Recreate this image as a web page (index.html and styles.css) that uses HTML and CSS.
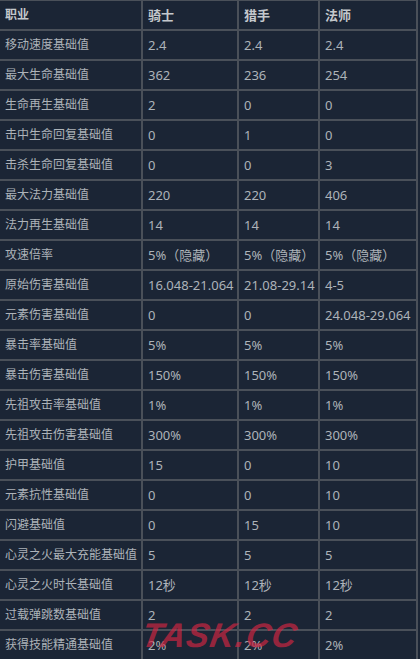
FILE: index.html
```html
<!DOCTYPE html>
<html lang="zh">
<head>
<meta charset="utf-8">
<link rel="stylesheet" href="styles.css">
</head>
<body>
<div class="page">
<div class="grid">
  <div class="c h k">职业</div><div class="c h">骑士</div><div class="c h">猎手</div><div class="c h">法师</div>
  <div class="c k">移动速度基础值</div><div class="c">2.4</div><div class="c">2.4</div><div class="c">2.4</div>
  <div class="c k">最大生命基础值</div><div class="c">362</div><div class="c">236</div><div class="c">254</div>
  <div class="c k">生命再生基础值</div><div class="c">2</div><div class="c">0</div><div class="c">0</div>
  <div class="c k">击中生命回复基础值</div><div class="c">0</div><div class="c">1</div><div class="c">0</div>
  <div class="c k">击杀生命回复基础值</div><div class="c">0</div><div class="c">0</div><div class="c">3</div>
  <div class="c k">最大法力基础值</div><div class="c">220</div><div class="c">220</div><div class="c">406</div>
  <div class="c k">法力再生基础值</div><div class="c">14</div><div class="c">14</div><div class="c">14</div>
  <div class="c k">攻速倍率</div><div class="c">5%（隐藏）</div><div class="c">5%（隐藏）</div><div class="c">5%（隐藏）</div>
  <div class="c k">原始伤害基础值</div><div class="c">16.048-21.064</div><div class="c">21.08-29.14</div><div class="c">4-5</div>
  <div class="c k">元素伤害基础值</div><div class="c">0</div><div class="c">0</div><div class="c">24.048-29.064</div>
  <div class="c k">暴击率基础值</div><div class="c">5%</div><div class="c">5%</div><div class="c">5%</div>
  <div class="c k">暴击伤害基础值</div><div class="c">150%</div><div class="c">150%</div><div class="c">150%</div>
  <div class="c k">先祖攻击率基础值</div><div class="c">1%</div><div class="c">1%</div><div class="c">1%</div>
  <div class="c k">先祖攻击伤害基础值</div><div class="c">300%</div><div class="c">300%</div><div class="c">300%</div>
  <div class="c k">护甲基础值</div><div class="c">15</div><div class="c">0</div><div class="c">10</div>
  <div class="c k">元素抗性基础值</div><div class="c">0</div><div class="c">0</div><div class="c">10</div>
  <div class="c k">闪避基础值</div><div class="c">0</div><div class="c">15</div><div class="c">10</div>
  <div class="c k">心灵之火最大充能基础值</div><div class="c">5</div><div class="c">5</div><div class="c">5</div>
  <div class="c k">心灵之火时长基础值</div><div class="c">12秒</div><div class="c">12秒</div><div class="c">12秒</div>
  <div class="c k">过载弹跳数基础值</div><div class="c">2</div><div class="c">2</div><div class="c">2</div>
  <div class="c k">获得技能精通基础值</div><div class="c">2%</div><div class="c">2%</div><div class="c">2%</div>
</div>
<div class="mark">TASK.CC</div>
</div>
</body>
</html>
```

FILE: styles.css
```css
html, body {
  margin: 0;
  padding: 0;
  background: #1b2535;
}
.page {
  position: relative;
  width: 420px;
  height: 659px;
  overflow: hidden;
  background: #1b2535;
}
.grid {
  display: grid;
  grid-template-columns: 141px 94px 79px 96px;
  grid-auto-rows: 28px;
  gap: 2px;
  width: 418px;
  padding-top: 1px;
  padding-right: 2px;
  box-sizing: border-box;
  background: #4a5059;
}
.c {
  background: #1b2535;
  color: #adb3b9;
  font-family: "Noto Sans", "Noto Sans CJK SC", sans-serif;
  font-size: 13px;
  line-height: 28px;
  padding-left: 5px;
  white-space: nowrap;
  overflow: hidden;
}
.k {
  font-size: 12px;
}
.h {
  color: #c4c8cc;
  font-weight: bold;
}
.mark {
  position: absolute;
  left: 142px;
  top: 616px;
  font-family: "Liberation Sans", sans-serif;
  font-weight: bold;
  font-style: italic;
  font-size: 34px;
  letter-spacing: 1px;
  color: rgba(205, 38, 66, 0.7);
  transform: skewX(-10deg);
}
```
